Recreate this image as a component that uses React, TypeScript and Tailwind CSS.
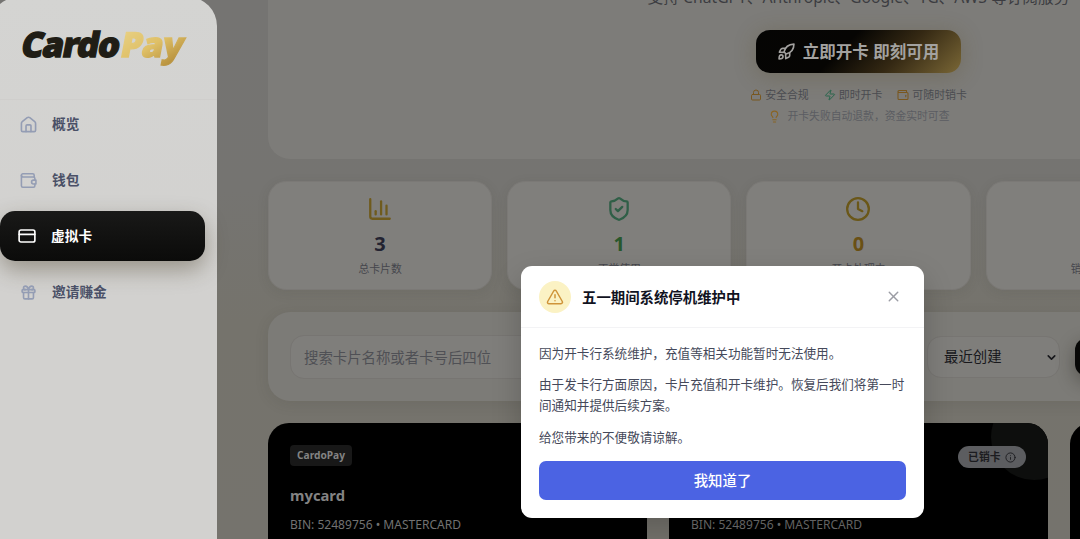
import React from 'react';
import { ChartColumn, ChevronDown, Clock, Gift, Info, Lightbulb, Lock, ShieldCheck, TriangleAlert, X, Zap } from 'lucide-react';

type IconProps = { className?: string; strokeWidth?: number };

const HomeIcon = ({ className }: IconProps) => (
  <svg viewBox="0 0 24 24" fill="none" stroke="currentColor" strokeWidth="2.3" strokeLinecap="round" strokeLinejoin="round" className={className}>
    <path d="M2 10.500c0-1 .4-1.900 1.200-2.500l7-5.600a3 3 0 0 1 3.600 0l7 5.600c.8.6 1.200 1.500 1.200 2.500V20a2 2 0 0 1-2 2H4a2 2 0 0 1-2-2z" />
    <path d="M8.500 22v-8a1.500 1.500 0 0 1 1.500-1.500h4a1.500 1.500 0 0 1 1.500 1.500v8" />
  </svg>
);

const WalletIcon = ({ className }: IconProps) => (
  <svg viewBox="0 0 24 24" fill="none" stroke="currentColor" strokeWidth="2.2" strokeLinecap="round" strokeLinejoin="round" className={className}>
    <path d="M20 7V4.500a2 2 0 0 0-2-2H4a2 2 0 0 0-2 2V19.500a2 2 0 0 0 2 2h15a2 2 0 0 0 2-2V17" />
    <path d="M2 4.500A2.500 2.500 0 0 0 4.500 7H19a2 2 0 0 1 2 2v2.500" />
    <path d="M22.500 11.500H19a2.700 2.700 0 0 0 0 5.400h3.500z" />
  </svg>
);

const SmallWalletIcon = ({ className }: IconProps) => (
  <svg viewBox="0 0 24 24" fill="none" stroke="currentColor" strokeWidth="2.1" strokeLinecap="round" strokeLinejoin="round" className={className}>
    <path d="M19 7V3H4a2 2 0 0 0-2 2v14a2 2 0 0 0 2 2h16a2 2 0 0 0 2-2V9a2 2 0 0 0-2-2H4a2 2 0 0 1-2-2" />
    <path d="M17.500 12.500v3" />
  </svg>
);

const CardIcon = ({ className }: IconProps) => (
  <svg viewBox="0 0 24 24" fill="none" stroke="currentColor" strokeWidth="2.2" strokeLinecap="round" strokeLinejoin="round" className={className}>
    <rect x="1.500" y="4" width="21" height="16" rx="2.500" />
    <path d="M1.500 9.800h21" />
  </svg>
);

const RocketIcon = ({ className }: IconProps) => (
  <svg viewBox="0 0 24 24" fill="none" stroke="currentColor" strokeWidth="2.300" strokeLinecap="round" strokeLinejoin="round" className={className}>
    <path d="M8.500 12.500C10 6 14 2 22.500 1.500c0 8.500-4.500 12.500-11 14z" />
    <path d="M10 7.500H6.500a3 3 0 0 0-2.700 1.700L2 13l5.500.300M16.500 14v3.500a3 3 0 0 1-1.700 2.700L11 22l-.300-5.500" />
    <path d="M1.500 22.500c0-3.500.700-5.700 3-5.700a2.600 2.600 0 0 1 2.600 2.600c0 2.300-2.200 3.100-5.600 3.100z" />
  </svg>
);

const menu = [
  { label: '概览', icon: HomeIcon },
  { label: '钱包', icon: WalletIcon },
  { label: '虚拟卡', icon: CardIcon, active: true },
  { label: '邀请赚金', icon: Gift },
];

const stats = [
  { value: '3', label: '总卡片数', icon: ChartColumn, iconColor: 'text-[#6f5b1d]', color: 'text-[#232331]' },
  { value: '1', label: '正常使用', icon: ShieldCheck, iconColor: 'text-[#2f5f47]', color: 'text-[#28572b]' },
  { value: '0', label: '开卡处理中', icon: Clock, iconColor: 'text-[#6a5718]', color: 'text-[#6a5014]' },
  { value: '2', label: '销卡处理中', icon: X, iconColor: 'text-[#4b4b50]', color: 'text-[#333338]' },
  { value: '0', label: '异常', icon: X, iconColor: 'text-[#4b4b50]', color: 'text-[#333338]' },
];

const Sidebar: React.FC = () => (
  <aside className="-ml-[10px] -mt-[3px] w-[227px] h-[600px] shrink-0 rounded-t-[29px] bg-gradient-to-b from-[#d4d4d2] via-[#d2d1cf] to-[#d2d1cf] pl-[10px]">
    <div className="h-[103px] border-b border-[#cfcecc] pl-[22px] pt-[24px]">
      <div className="inline-block -skew-x-[11deg] whitespace-nowrap text-[34.5px] leading-[46px] font-black tracking-[-1.2px] [-webkit-text-stroke-width:1.3px]">
        <span className="text-[#201d15]">Cardo</span>
        <span className="ml-[2px] bg-gradient-to-br from-[#ead489] via-[#dfc067] to-[#a9802c] bg-clip-text pr-1 tracking-[-0.6px] text-transparent">Pay</span>
      </div>
    </div>
    <nav className="-mt-px flex flex-col gap-[6px]">
      {menu.map(({ label, icon: Icon, active }) => (
        <div
          key={label}
          className={
            active
              ? 'flex h-[50px] w-[205px] items-center rounded-[15px] bg-gradient-to-b from-[#191918] to-[#0b0b0a] pl-[18px] text-white shadow-[0_9px_22px_rgba(60,50,25,0.38)]'
              : 'flex h-[50px] w-[205px] items-center pl-[20px] text-[#4a5067]'
          }
        >
          <Icon className={active ? 'mr-[15px] size-[18px]' : 'mr-[15px] size-[17px] text-[#949db4]'} strokeWidth={2.3} />
          <span className="text-[13.7px] font-bold">{label}</span>
        </div>
      ))}
    </nav>
  </aside>
);

const Hero: React.FC = () => (
  <section className="flex h-[159px] flex-col items-center overflow-hidden rounded-b-[22px] bg-[#7d7c79]">
    <p className="-mt-[15px] h-[24px] shrink-0 whitespace-nowrap text-[15.7px] leading-[24px] text-[#3c3c41]">支持 ChatGPT、Anthropic、Google、TG、AWS 等订阅服务</p>
    <button className="mt-[21px] flex h-[43px] w-[205px] shrink-0 items-center justify-center rounded-[14px] bg-[linear-gradient(135deg,#050504_0%,#060503_42%,#342813_68%,#7a6736_100%)] text-[16.5px] font-bold text-[#a3a2a0] shadow-[0_3px_22px_rgba(90,75,35,0.3)]">
      <RocketIcon className="mr-[8px] size-[17px]" />
      <span className="pt-[2px]">立即开卡 即刻可用</span>
    </button>
    <div className="mt-[14px] flex h-[16px] items-center gap-[15px] text-[10.9px] text-[#4a4b50]">
      <span className="flex items-center gap-[3px]"><Lock className="size-[12px] text-[#79571f]" />安全合规</span>
      <span className="flex items-center gap-[3px]"><Zap className="size-[12px] text-[#28664c]" />即时开卡</span>
      <span className="flex items-center gap-[3px]"><SmallWalletIcon className="size-[12px] text-[#79571f]" />可随时销卡</span>
    </div>
    <div className="mt-[5px] flex h-[17px] items-center gap-[7px] text-[10.8px] text-[#5b5c62]">
      <Lightbulb className="size-[13px] text-[#8a6422]" />
      开卡失败自动退款，资金实时可查
    </div>
  </section>
);

const Stats: React.FC = () => (
  <section className="mt-[22px] grid grid-cols-5 gap-[15px]">
    {stats.map(({ value, label, icon: Icon, iconColor, color }, i) => (
      <div key={i} className="flex h-[109px] flex-col items-center rounded-[18px] border border-[#7b7976] bg-[#807f7c] shadow-[0_3px_12px_rgba(60,58,50,0.1)]">
        <Icon className={`mt-[14px] size-[26px] ${iconColor}`} strokeWidth={2.1} />
        <div className={`mt-[9px] text-[20px] leading-[26px] font-bold ${color}`}>{value}</div>
        <div className="mt-[4px] text-[10.8px] leading-[16px] text-[#45464c]">{label}</div>
      </div>
    ))}
  </section>
);

const FilterBar: React.FC = () => (
  <section className="mt-[22px] flex h-[89px] items-center gap-[15px] rounded-[22px] bg-[#7c7b77] px-[22px] text-[14.4px] shadow-[0_3px_14px_rgba(60,58,50,0.12)]">
    <div className="flex h-[44px] w-[622px] shrink-0 items-center rounded-[14px] border border-[#777572] bg-[#7f7e7b] pl-[13px] pt-[2px] text-[#4f5055]">搜索卡片名称或者卡号后四位</div>
    <div className="flex h-[42px] w-[133px] shrink-0 items-center justify-between rounded-[14px] border border-[#777572] bg-[#7f7e7b] pl-[16px] pr-px pt-px text-[#18181c]">
      最近创建
      <ChevronDown className="size-[13px]" strokeWidth={3} />
    </div>
    <div className="h-[38px] flex-1 rounded-[12px] bg-[#080807] shadow-[0_6px_18px_rgba(30,28,20,0.4)]" />
  </section>
);

const CardTile = ({ closed }: { closed?: boolean }) => (
  <article className="relative h-[230px] overflow-hidden rounded-[21px] bg-black px-[22px] pt-[22px]">
    {closed && <div className="absolute -right-[29px] -top-[29px] size-[86px] rounded-full bg-[#0d0e0d]" />}
    <div className="relative flex h-[23px] items-start justify-between">
      <span className="flex h-[21px] items-center rounded-[4px] bg-[#181818] px-[7px] text-[10.2px] font-bold text-[#838383]">CardoPay</span>
      {closed && (
        <span className="mt-[1px] flex h-[22px] items-center gap-[4px] rounded-full bg-[#5c5d60] px-[10.5px] text-[10.8px] font-bold text-[#1c1c20]">
          已销卡
          <Info className="size-[11px]" />
        </span>
      )}
    </div>
    <h3 className="mt-[16px] text-[14.8px] leading-[22px] font-bold text-[#838383]">mycard</h3>
    <p className="mt-[10px] whitespace-nowrap text-[12.05px] leading-[18px] text-[#727272]">BIN: 52489756 • MASTERCARD</p>
  </article>
);

const NoticeModal: React.FC = () => (
  <div className="absolute left-[521px] top-[266px] h-[252px] w-[403px] rounded-[11px] bg-white shadow-[0_12px_30px_rgba(0,0,0,0.2)]">
    <header className="flex h-[62px] items-center border-b border-[#f3f3f5] pl-[18px] pr-[22px]">
      <span className="flex size-[32px] items-center justify-center rounded-full bg-[#fbf2c4]">
        <TriangleAlert className="size-[18px] text-[#cf9439]" />
      </span>
      <h2 className="ml-[11px] flex-1 pt-[2px] text-[14.4px] font-bold text-[#11131f]">五一期间系统停机维护中</h2>
      <X className="size-[17px] text-[#9b9ca4]" />
    </header>
    <div className="px-[18px] pt-[15px]">
      <div className="flex flex-col gap-[10px] text-[12.6px] leading-[21.2px] text-[#45495a]">
        <p>因为开卡行系统维护，充值等相关功能暂时无法使用。</p>
        <p>由于发卡行方面原因，卡片充值和开卡维护。恢复后我们将第一时<br />间通知并提供后续方案。</p>
        <p>给您带来的不便敬请谅解。</p>
      </div>
      <button className="mt-[13.2px] h-[39px] w-full rounded-[7px] bg-[#4b63e3] text-[14.4px] font-medium text-white">我知道了</button>
    </div>
  </div>
);

const App: React.FC = () => {
  return (
    <div className="relative flex h-[539px] w-[1080px] overflow-hidden bg-[linear-gradient(180deg,#757472_0%,#757471_35%,#75736c_60%,#75736d_100%)] font-['Noto_Sans','Noto_Sans_CJK_SC',sans-serif]">
      <Sidebar />
      <main className="ml-[51px] w-[1181px] shrink-0">
        <Hero />
        <Stats />
        <FilterBar />
        <section className="mt-[22px] grid grid-cols-3 gap-[22px]">
          <CardTile />
          <CardTile closed />
          <CardTile />
        </section>
      </main>
      <NoticeModal />
    </div>
  );
};

export default App;
